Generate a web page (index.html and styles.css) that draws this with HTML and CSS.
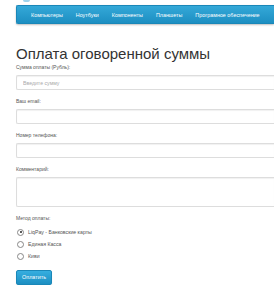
FILE: index.html
```html
<!DOCTYPE html>
<html lang="ru">
<head>
  <meta charset="UTF-8">
  <title>Оплата</title>
  <link rel="stylesheet" href="styles.css">
</head>
<body>
  <div class="logo-edge"></div>
  <nav class="navbar">
    <a href="#">Компьютеры</a>
    <a href="#">Ноутбуки</a>
    <a href="#">Компоненты</a>
    <a href="#">Планшеты</a>
    <a href="#">Програмное обеспечение</a>
  </nav>

  <div class="container">
    <h1>Оплата оговоренной суммы</h1>
    <form class="pay-form">
      <div class="form-group">
        <label for="amount">Сумма оплаты (Рубль):</label>
        <input type="text" id="amount" placeholder="Введите сумму">
      </div>
      <div class="form-group">
        <label for="email">Ваш email:</label>
        <input type="text" id="email">
      </div>
      <div class="form-group">
        <label for="phone">Номер телефона:</label>
        <input type="text" id="phone">
      </div>
      <div class="form-group">
        <label for="comment">Комментарий:</label>
        <textarea id="comment"></textarea>
      </div>
      <div class="form-group methods">
        <label>Метод оплаты:</label>
        <label class="radio"><input type="radio" name="method" checked> LiqPay - Банковские карты</label>
        <label class="radio"><input type="radio" name="method"> Единая Касса</label>
        <label class="radio"><input type="radio" name="method"> Киви</label>
      </div>
      <button type="submit">Оплатить</button>
    </form>
  </div>
</body>
</html>
```

FILE: styles.css
```css
body {
  margin: 0;
  font-family: 'Liberation Sans', Arial, sans-serif;
  color: #333;
  background: #fff;
  overflow: hidden;
}

.logo-edge {
  position: absolute;
  left: 23px;
  top: 0;
  width: 7px;
  height: 2px;
  background: #9fd3ec;
  border-radius: 0 0 3px 3px;
}

.navbar {
  display: flex;
  align-items: center;
  gap: 13px;
  margin: 5px 0 0 16px;
  padding-left: 14px;
  height: 19px;
  background: linear-gradient(#34a8d8, #1d8fc2);
  border: 1px solid #1a87b8;
  border-right: none;
  border-radius: 2px 0 0 2px;
  box-sizing: border-box;
  box-shadow: 0 1px 2px rgba(0, 0, 0, 0.25);
}

.navbar a {
  color: #fff;
  font-size: 5.4px;
  text-decoration: none;
  white-space: nowrap;
}

.container {
  padding-left: 16px;
}

h1 {
  font-size: 15px;
  font-weight: normal;
  line-height: 17px;
  margin: 21px 0 1px;
  color: #333;
}

.form-group {
  display: flex;
  flex-direction: column;
  margin-bottom: 7px;
}

.form-group > label {
  font-size: 5px;
  line-height: 8px;
  color: #555;
  margin-bottom: 4px;
}

input[type="text"],
textarea {
  height: 15px;
  box-sizing: border-box;
  border: 1px solid #ddd;
  border-right: none;
  border-radius: 2px 0 0 2px;
  padding: 0 6px;
  font-family: inherit;
  font-size: 5.2px;
  color: #555;
  box-shadow: inset 0 1px 1px rgba(0, 0, 0, 0.06);
  outline: none;
}

input::placeholder {
  color: #aaa;
}

textarea {
  height: 30px;
  resize: none;
}

.methods {
  margin-bottom: 5px;
}

.methods > label:first-child {
  margin-bottom: 6px;
}

.methods .radio {
  display: flex;
  align-items: center;
  gap: 4px;
  height: 8px;
  margin-bottom: 4px;
  font-size: 5.2px;
  color: #555;
}

.methods .radio:last-child {
  margin-bottom: 0;
}

.radio input {
  appearance: none;
  margin: 0 0 0 1px;
  width: 7px;
  height: 7px;
  border: 1px solid #888;
  border-radius: 50%;
  box-sizing: border-box;
  background: #fff;
  position: relative;
}

.radio input:checked::after {
  content: '';
  position: absolute;
  left: 1.5px;
  top: 1.5px;
  width: 2px;
  height: 2px;
  border-radius: 50%;
  background: #222;
}

button {
  width: 36px;
  height: 15px;
  padding: 0;
  font-family: inherit;
  font-size: 5.4px;
  color: #fff;
  background: linear-gradient(#36aee0, #1c8fc2);
  border: 1px solid #1a87b8;
  border-radius: 2px;
  box-shadow: 0 1px 1px rgba(0, 0, 0, 0.15);
  cursor: pointer;
}
```
